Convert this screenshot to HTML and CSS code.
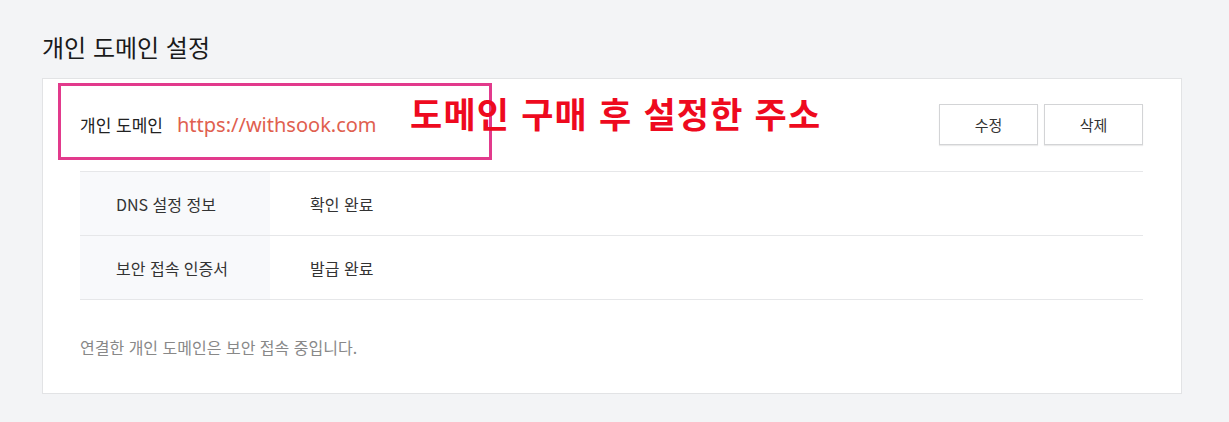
FILE: index.html
```html
<!DOCTYPE html>
<html lang="ko">
<head>
  <meta charset="UTF-8" />
  <meta name="viewport" content="width=device-width, initial-scale=1" />
  <title>개인 도메인 설정</title>
  <link rel="stylesheet" href="styles.css">
</head>
<body>
  <main class="page">
    <h1 class="page-title">개인 도메인 설정</h1>

    <section class="card">
      <div class="domain-head">
        <div class="domain-info">
          <span class="domain-label">개인 도메인</span>
          <span class="domain-url">https://withsook.com</span>
        </div>
        <div class="domain-actions">
          <button class="btn">수정</button>
          <button class="btn">삭제</button>
        </div>

        <!-- screenshot annotation -->
        <div class="mark-box"></div>
        <div class="mark-text">도메인 구매 후 설정한 주소</div>
      </div>

      <div class="info-table">
        <div class="info-row">
          <div class="info-key">DNS 설정 정보</div>
          <div class="info-val">확인 완료</div>
        </div>
        <div class="info-row">
          <div class="info-key">보안 접속 인증서</div>
          <div class="info-val">발급 완료</div>
        </div>
      </div>

      <p class="note">연결한 개인 도메인은 보안 접속 중입니다.</p>
    </section>
  </main>
</body>
</html>
```

FILE: styles.css
```css
* {
  margin: 0;
  padding: 0;
  box-sizing: border-box;
}
body {
  font-family: "Noto Sans CJK KR", "Noto Sans", sans-serif;
  background: #f3f4f6;
  color: #222;
}
.page {
  padding: 29px 47px 0 42px;
}
.page-title {
  font-size: 24px;
  font-weight: 400;
  line-height: 36px;
  color: #1a1a1a;
  margin-bottom: 13px;
}
.card {
  background: #fff;
  border: 1px solid #e2e3e5;
  padding: 25px 38px 35px 37px;
}
.domain-head {
  position: relative;
  display: flex;
  align-items: center;
  justify-content: space-between;
  padding-bottom: 26px;
  border-bottom: 1px solid #e6e7e9;
}
.domain-info {
  display: flex;
  align-items: center;
  gap: 14px;
}
.domain-label {
  font-size: 17px;
  color: #222;
}
.domain-url {
  font-family: "Noto Sans", sans-serif;
  font-size: 20px;
  color: #e0604f;
}
.domain-actions {
  display: flex;
  gap: 6px;
}
.btn {
  width: 99px;
  height: 41px;
  background: #fff;
  border: 1px solid #d3d4d6;
  box-shadow: 0 1px 1px rgba(0,0,0,0.08);
  font-family: inherit;
  font-size: 15px;
  color: #333;
  cursor: pointer;
}
.mark-box {
  position: absolute;
  left: -22px;
  top: -21px;
  width: 434px;
  height: 77px;
  border: 3px solid #e23a8c;
}
.mark-text {
  position: absolute;
  left: 330px;
  top: -15px;
  font-size: 35px;
  font-weight: 700;
  line-height: 48px;
  color: #ee0a1e;
  letter-spacing: 1.2px;
}
.info-row {
  display: flex;
  height: 64px;
  border-bottom: 1px solid #e6e7e9;
}
.info-key {
  width: 190px;
  background: #f8f9fb;
  padding-left: 36px;
  display: flex;
  align-items: center;
  font-size: 16px;
  color: #333;
}
.info-val {
  padding-left: 40px;
  display: flex;
  align-items: center;
  font-size: 16px;
  color: #333;
}
.note {
  margin-top: 36px;
  font-size: 16px;
  line-height: 22px;
  color: #888;
}
```
